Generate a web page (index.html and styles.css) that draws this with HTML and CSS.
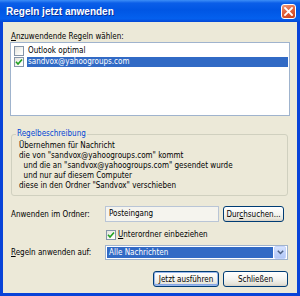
FILE: index.html
```html
<!DOCTYPE html>
<html lang="de">
<head>
<meta charset="utf-8">
<title>Regeln jetzt anwenden</title>
<link rel="stylesheet" href="styles.css">
</head>
<body>
<div class="window">
  <div class="titlebar">
    <span class="title">Regeln jetzt anwenden</span>
    <button class="close" aria-label="Schließen">
      <svg width="9" height="9" viewBox="0 0 9 9"><path d="M1 1 L8 8 M8 1 L1 8" stroke="#fff" stroke-width="1.8" stroke-linecap="square"/></svg>
    </button>
  </div>
  <div class="client">
    <div class="list-label"><u>A</u>nzuwendende Regeln wählen:</div>
    <div class="listbox">
      <div class="item"><span class="cb"></span><span class="item-text">Outlook optimal</span></div>
      <div class="item"><span class="cb"><svg class="tick" width="8" height="8" viewBox="0 0 8 8"><path d="M1 3.8 L3 6 L7 1.5" fill="none" stroke="#21a121" stroke-width="1.6"/></svg></span><span class="item-text selected">sandvox@yahoogroups.com</span></div>
    </div>
    <fieldset class="group">
      <legend>Regelbeschreibung</legend>
      <div class="desc">Übernehmen für Nachricht
die von "sandvox@yahoogroups.com" kommt
  und die an "sandvox@yahoogroups.com" gesendet wurde
  und nur auf diesem Computer
diese in den Ordner "Sandvox" verschieben</div>
    </fieldset>
    <div class="form">
      <span class="lbl">Anwenden im Ordner:</span>
      <div class="folder-row">
        <div class="textbox">Posteingang</div>
        <button class="btn browse">Dur<u>c</u>hsuchen...</button>
      </div>
      <span class="spacer"></span>
      <div class="check-row"><span class="cb"><svg class="tick" width="8" height="8" viewBox="0 0 8 8"><path d="M1 3.8 L3 6 L7 1.5" fill="none" stroke="#21a121" stroke-width="1.6"/></svg></span><span><u>U</u>nterordner einbeziehen</span></div>
      <span class="lbl"><u>R</u>egeln anwenden auf:</span>
      <div class="combo">
        <span class="combo-text">Alle Nachrichten</span>
        <span class="combo-btn"><svg width="7" height="5" viewBox="0 0 7 5"><path d="M0.8 0.8 L3.5 3.5 L6.2 0.8" fill="none" stroke="#4d6185" stroke-width="1.5"/></svg></span>
      </div>
    </div>
    <div class="actions">
      <button class="btn default"><u>J</u>etzt ausführen</button>
      <button class="btn close-btn">Schließen</button>
    </div>
  </div>
</div>
</body>
</html>
```

FILE: styles.css
```css
html, body {
  margin: 0;
  padding: 0;
  background: #ffffff;
}

body {
  font-family: "DejaVu Sans Condensed", "DejaVu Sans", sans-serif;
  font-stretch: condensed;
  font-size: 8px;
  color: #000;
}

.window {
  width: 300px;
  height: 296px;
  box-sizing: border-box;
  background: #0843d8;
  display: flex;
  flex-direction: column;
}

.titlebar {
  height: 22px;
  flex: none;
  display: flex;
  align-items: center;
  justify-content: space-between;
  padding: 0 4px 0 6px;
  background: linear-gradient(180deg, #3d8ef7 0%, #0b5ee8 14%, #0056e4 45%, #0460ee 85%, #0447d6 100%);
}

.title {
  font-family: "Liberation Sans", Arial, sans-serif;
  font-stretch: normal;
  font-weight: bold;
  font-size: 10px;
  color: #fff;
  text-shadow: 1px 1px 0 #0a2f99;
}

.close {
  width: 15px;
  height: 15px;
  margin-top: 1px;
  padding: 0;
  border: 1px solid #fff;
  border-radius: 3px;
  background: linear-gradient(160deg, #f09a7c 0%, #e2653f 45%, #c8401c 100%);
  display: flex;
  align-items: center;
  justify-content: center;
}

.client {
  flex: 1;
  margin: 0 3px 3px 3px;
  background: #ece9d8;
  padding: 9px 9px 0 8px;
}

.list-label {
  line-height: 11px;
  height: 11px;
}

.listbox {
  height: 74px;
  box-sizing: border-box;
  margin: 0 -2px 0 -1px;
  border: 1px solid #9fb3cd;
  background: #fff;
  padding: 2px 1px;
}

.item {
  height: 11px;
  display: flex;
  align-items: center;
}

.item .cb {
  margin-left: 2px;
  margin-right: 3px;
}

.cb {
  width: 10px;
  height: 10px;
  box-sizing: border-box;
  border: 1px solid #8595a8;
  background: linear-gradient(135deg, #e2e2dc 0%, #fbfbf8 70%, #fff 100%);
  display: inline-flex;
  align-items: center;
  justify-content: center;
  flex: none;
}

.item-text {
  flex: 1;
  line-height: 11px;
  height: 11px;
  padding-left: 1px;
}

.item-text.selected {
  background: #316ac5;
  color: #fff;
  height: 10px;
  line-height: 10px;
}

.group {
  margin: 13px 0 0 0;
  padding: 0 0 4px 0;
  border: 1px solid #d0d0bf;
  border-radius: 3px;
}

.group legend {
  color: #0046d5;
  padding: 0 1px;
  margin-left: 4px;
  line-height: 10px;
}

.desc {
  white-space: pre;
  line-height: 10px;
  padding: 2px 0 0 7px;
}

.form {
  margin-top: 10px;
  display: grid;
  grid-template-columns: 94px 1fr;
  align-items: center;
}

.lbl {
  line-height: 11px;
}

.folder-row {
  display: flex;
  gap: 4px;
  height: 16px;
}

.textbox {
  width: 114px;
  box-sizing: border-box;
  border: 1px solid #b9c5d6;
  background: #f5f4ee;
  padding-left: 3px;
  line-height: 14px;
}

.btn {
  font: inherit;
  font-stretch: condensed;
  color: #000;
  box-sizing: border-box;
  height: 16px;
  padding: 0;
  border: 1px solid #003c74;
  border-radius: 3px;
  background: linear-gradient(180deg, #ffffff 0%, #f4f4f0 50%, #e6e4da 85%, #d6d0c5 100%);
  line-height: 13px;
}

.browse {
  width: 61px;
}

.check-row {
  margin: 8px 0 5px 1px;
  display: flex;
  align-items: center;
  gap: 2px;
  line-height: 10px;
}

.combo {
  height: 15px;
  box-sizing: border-box;
  border: 1px solid #9fb3cd;
  background: #fff;
  display: flex;
  align-items: center;
  padding: 1px 1px 1px 1px;
}

.combo-text {
  flex: 1;
  height: 11px;
  line-height: 11px;
  background: #316ac5;
  color: #fff;
  padding-left: 2px;
  margin-right: 1px;
}

.combo-btn {
  width: 12px;
  height: 13px;
  box-sizing: border-box;
  border: 1px solid #c3d3fd;
  border-radius: 2px;
  background: linear-gradient(180deg, #d8e4fd 0%, #c1d3fb 50%, #b2c7f6 100%);
  display: flex;
  align-items: center;
  justify-content: center;
}

.actions {
  margin-top: 11px;
  display: flex;
  justify-content: flex-end;
  gap: 4px;
}

.default {
  width: 66px;
  box-shadow: inset 0 0 0 1px #9ab8ec, inset 0 -1px 0 1px #86a6e4;
}

.close-btn {
  width: 65px;
}
```
